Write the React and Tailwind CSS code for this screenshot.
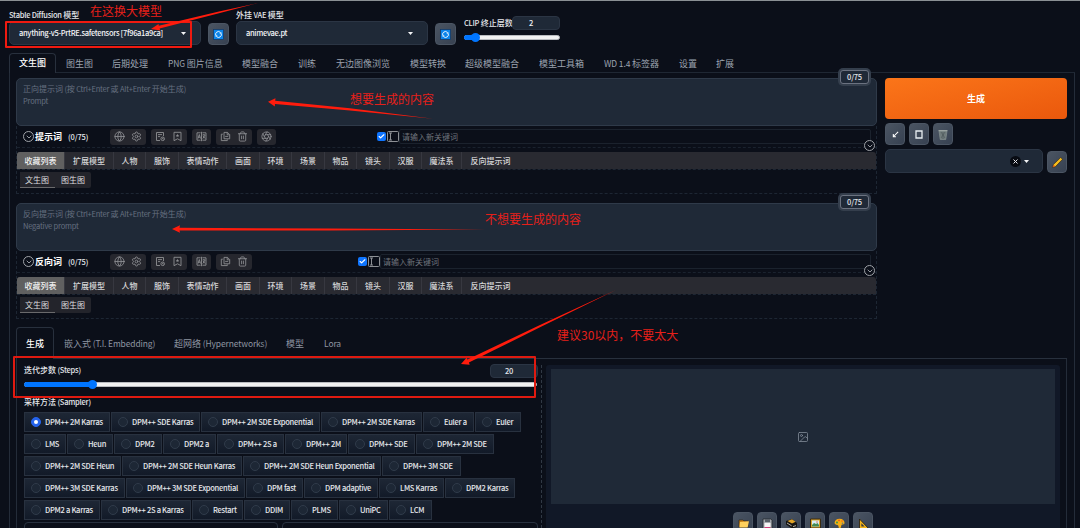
import React from "react";
import { Globe, Settings, Trash2, Aperture, ChevronDown, Image as ImageIcon, Check } from "lucide-react";

const mainTabs = [
  ["文生图", "w-[47px]"], ["图生图", "w-[46px]"], ["后期处理", "w-[56px]"], ["PNG 图片信息", "w-[74px]"],
  ["模型融合", "w-[56px]"], ["训练", "w-[38px]"], ["无边图像浏览", "w-[74px]"], ["模型转换", "w-[55px]"],
  ["超级模型融合", "w-[74px]"], ["模型工具箱", "w-[65px]"], ["WD 1.4 标签器", "w-[75px]"], ["设置", "w-[37px]"], ["扩展", "w-[38px]"],
];

const wordTabs = [
  ["收藏列表", "w-[48px]"], ["扩展模型", "w-[49px]"], ["人物", "w-[32px]"], ["服饰", "w-[33px]"],
  ["表情动作", "w-[48px]"], ["画面", "w-[33px]"], ["环境", "w-[32px]"], ["场景", "w-[33px]"],
  ["物品", "w-[32px]"], ["镜头", "w-[33px]"], ["汉服", "w-[32px]"], ["魔法系", "w-[40px]"], ["反向提示词", "w-[57px]"],
];

const samplerRows = [
  [["DPM++ 2M Karras", "w-[86px]"], ["DPM++ SDE Karras", "w-[89px]"], ["DPM++ 2M SDE Exponential", "w-[119px]"], ["DPM++ 2M SDE Karras", "w-[101px]"], ["Euler a", "w-[51px]"], ["Euler", "w-[46px]"]],
  [["LMS", "w-[42px]"], ["Heun", "w-[46px]"], ["DPM2", "w-[48px]"], ["DPM2 a", "w-[53px]"], ["DPM++ 2S a", "w-[67px]"], ["DPM++ 2M", "w-[62px]"], ["DPM++ SDE", "w-[67px]"], ["DPM++ 2M SDE", "w-[78px]"]],
  [["DPM++ 2M SDE Heun", "w-[97px]"], ["DPM++ 2M SDE Heun Karras", "w-[120px]"], ["DPM++ 2M SDE Heun Exponential", "w-[138px]"], ["DPM++ 3M SDE", "w-[79px]"]],
  [["DPM++ 3M SDE Karras", "w-[101px]"], ["DPM++ 3M SDE Exponential", "w-[119px]"], ["DPM fast", "w-[57px]"], ["DPM adaptive", "w-[74px]"], ["LMS Karras", "w-[65px]"], ["DPM2 Karras", "w-[70px]"]],
  [["DPM2 a Karras", "w-[76px]"], ["DPM++ 2S a Karras", "w-[90px]"], ["Restart", "w-[51px]"], ["DDIM", "w-[46px]"], ["PLMS", "w-[47px]"], ["UniPC", "w-[49px]"], ["LCM", "w-[43px]"]],
];

const toolBtn = "flex shrink-0 items-center justify-center rounded-[4px] border border-[#4b5563] bg-linear-to-br from-[#4b5563] to-[#374151]";

/* Sets Latin runs slightly smaller and tighter than the Chinese text around them. */
function Mixed({ text, tracking = "tracking-[-0.25px]" }) {
  return text.split(/([\x20-\x7e]+)/).filter(Boolean).map((part, i) =>
    /^[\x20-\x7e]/.test(part) ? <span key={i} className={`whitespace-pre text-[0.94em] ${tracking}`}>{part}</span> : part
  );
}

function Caret() {
  return <svg className="shrink-0" width="5" height="3" viewBox="0 0 5 3"><path d="M0 0h5L2.5 3z" fill="#f3f4f6" /></svg>;
}

function Refresh() {
  return (
    <div className={`${toolBtn} mt-[23px] h-[22px] w-[21px]`}>
      <svg className="shrink-0" width="11" height="11" viewBox="0 0 11 11" fill="none">
        <rect x="0.5" y="0.5" width="10" height="10" fill="#0b84ea" stroke="#173b66" strokeWidth="0.8" />
        <path d="M3 6.8A2.8 2.8 0 0 1 7.4 3.4M8 4.2A2.8 2.8 0 0 1 3.6 7.6" stroke="#fff" strokeWidth="0.9" />
        <path d="M8.3 2.7v1.9H6.4zM2.7 8.3V6.4h1.9z" fill="#fff" />
      </svg>
    </div>
  );
}

function Select({ label, value, width }) {
  return (
    <div className={`shrink-0 pt-[9px] ${width}`}>
      <div className="h-[12px] text-[8px] font-medium leading-[12px] text-[#e5e7eb]"><Mixed text={label} /></div>
      <div className="flex h-6 items-center justify-between rounded-[5px] border border-[#2b3544] bg-[#1f2937] pl-[9px] pr-[14px] text-[8px] font-medium text-[#f3f4f6]">
        <span><Mixed text={value} tracking="tracking-[-0.32px]" /></span>
        <Caret />
      </div>
    </div>
  );
}

function CircleDown({ className = "" }) {
  return (
    <span className={`flex size-[11px] shrink-0 items-center justify-center rounded-full border border-[#a0a3a8] text-[#b8bbc0] ${className}`}>
      <ChevronDown size={8} strokeWidth={2.4} />
    </span>
  );
}

function Glyph({ children }) {
  return <svg className="shrink-0" width="11" height="11" viewBox="0 0 11 11" fill="none" stroke="currentColor" strokeWidth="0.9">{children}</svg>;
}

const HistoryIcon = () => <Glyph><path d="M5 9.5H1.5v-8h7v3.5M3 3.6h4M3 5.6h2.2" /><circle cx="7.7" cy="7.8" r="1.8" /><path d="M7.7 6.8v1.2h.9" /></Glyph>;
const FavoriteIcon = () => <Glyph><path d="M2 1.3h7v8.4L5.5 7.8 2 9.7z" /><path d="M5.5 2.8l.5 1.1 1.2.1-.9.8.3 1.2-1.1-.6-1.1.6.3-1.2-.9-.8L5 3.9z" fill="currentColor" stroke="none" /></Glyph>;
const TranslateIcon = () => <Glyph><path d="M4.6 1.8H1v7.4h3.6M6.4 1.8H10v7.4H6.4M5.5.8v9.4M2.1 7.5l1.2-4 1.2 4M2.5 6.2h1.6M6.5 4h2.8M7.9 3v1M9 4.2L6.8 7.6M7 5l2.2 2.6" /></Glyph>;
const CopyIcon = () => <Glyph><path d="M4 1.4h3.5l2.2 2.2v4.2H4zM7.2 1.4v2.4h2.4M2.8 3.2H1.3v6.4h6V8.4M5.2 5.4h3" /></Glyph>;

function IconGroup({ icons }) {
  return (
    <div className="flex h-4 items-center gap-[6px] rounded-[3px] bg-[#26272e] px-[4px] text-[#8d8e92]">
      {icons.map((Icon, i) => <Icon key={i} size={11} strokeWidth={1.9} />)}
    </div>
  );
}

function PromptBlock({ line1, line2, title, extra }) {
  return (
    <div className="w-[861px]">
      <div className="relative h-12 rounded-[5px] border border-[#2f3a49] bg-[#1f2937] pl-[6px] pt-[4px] text-[8px] leading-[12px] text-[#667080]">
        <div className="h-[12px]"><Mixed text={line1} /></div>
        <div className="h-[12px]"><Mixed text={line2} tracking="tracking-[-0.2px]" /></div>
        <div className="absolute right-[7px] top-[-9px] flex h-[14px] w-[29px] items-center justify-center rounded-[3px] border border-[#6b7280] bg-[#1f2937] text-[8px] font-medium text-[#e5e7eb] shadow-[0_0_0_2px_#343e4c]"><Mixed text="0/75" /></div>
      </div>
      <div className="h-[68px] border-x border-b border-dashed border-[#1d2633]">
        <div className="relative flex h-[22px] items-center border-b border-dashed border-[#1a222e] pl-[6px]">
          <CircleDown />
          <span className="ml-[1px] w-[33px] text-[9px] font-bold text-white">{title}</span>
          <span className="w-[42px] text-[8px] font-medium text-[#e5e7eb]"><Mixed text="(0/75)" tracking="tracking-[-0.15px]" /></span>
          <div className="flex gap-[5px]">
            <IconGroup icons={[Globe, Settings]} />
            <IconGroup icons={[HistoryIcon, FavoriteIcon]} />
            <IconGroup icons={[TranslateIcon]} />
            <IconGroup icons={[CopyIcon, Trash2]} />
            {extra && <IconGroup icons={[Aperture]} />}
          </div>
          <div className={`flex flex-1 items-center ${extra ? "ml-[101px]" : "ml-[106px]"}`}>
            <span className="flex size-[9px] items-center justify-center rounded-[2px] bg-[#0f75ff] text-white"><Check size={7} strokeWidth={4} /></span>
            <svg className="ml-[1px]" width="12" height="11" viewBox="0 0 12 11" fill="none" stroke="#8d9095">
              <rect x="0.5" y="0.5" width="11" height="10" rx="1" />
              <path d="M2 2h3M3.5 2v7M2 9h3" />
            </svg>
            <span className="mr-[5px] flex h-[15px] flex-1 items-center rounded-[2px] border border-[#1b222d] pl-[2px] text-[8px] text-[#6f747c]">请输入新关键词</span>
          </div>
          <CircleDown className="absolute right-[1px] top-[14px] bg-[#0b0f19]" />
        </div>
        <div className="mt-[4px] flex h-[17px] rounded-t-[3px] bg-[#292a31] text-[8px] font-medium text-[#d6d6d8]">
          {wordTabs.map(([name, w], i) => (
            <div key={name} className={`flex h-full shrink-0 items-center justify-center ${w} ${i === 0 ? "rounded-tl-[3px] bg-[#606060] text-[#f0f0f0]" : ""} ${i < 12 ? "border-r border-[#373840]" : ""}`}>{name}</div>
          ))}
        </div>
        <div className="flex h-[24px] border-t border-dashed border-[#1d2633] pl-[3px] pt-[2px] text-[8px] text-[#dcdcde]">
          <div className="flex h-[16px] w-[35px] items-center border-b border-[#6a6a6c] bg-[#23242b] pl-[5px]">文生图</div>
          <div className="flex h-[16px] w-[36px] items-center rounded-r-[2px] bg-[#23242b] pb-px pl-[6px]">图生图</div>
        </div>
      </div>
    </div>
  );
}

function Slider({ fill, className }) {
  return (
    <div className={`relative h-[5px] rounded-full border border-[#b9bbbf] bg-[#f1f1f1] ${className}`}>
      <div className={`absolute -left-px -top-px h-[5px] rounded-full bg-[#0075ff] ${fill}`}>
        <span className="absolute -right-[4px] -top-[2px] size-[9px] rounded-full bg-[#0075ff]" />
      </div>
    </div>
  );
}

const outputIcons = [
  <svg key="folder" width="11" height="11" viewBox="0 0 11 11"><path d="M1 2h4l1 1h4v6H1z" fill="#c47a12" stroke="#2b2113" strokeWidth=".6" /><path d="M2 4l9-.8L9.6 9.5H1.4z" fill="#ffd05c" /></svg>,
  <svg key="disk" width="11" height="11" viewBox="0 0 11 11"><path d="M1 1h8l1 1v9H1z" fill="#a7abb0" stroke="#25282d" strokeWidth=".8" /><path d="M3 1h5v3H3z" fill="#5a6068" /><path d="M2.5 5h6v4h-6z" fill="#f7f4f5" /><path d="M2.5 9h6v2h-6z" fill="#cf3d79" /></svg>,
  <svg key="box" width="11" height="11" viewBox="0 0 11 11"><path d="M0 3l6-2 5 4v4l-5 1.5-6-4z" fill="#171512" /><path d="M1.5 3L6 1.2l3.6 2.6L6 5.4z" fill="#e2a528" /><path d="M1 5l4.6 2.8M7 8.6l3-1" stroke="#d9d4c4" strokeWidth=".8" fill="none" /></svg>,
  <svg key="picture" width="11" height="11" viewBox="0 0 11 11"><path d="M.5 1h10v9H.5z" fill="#dda52b" stroke="#3c2c10" /><path d="M2 2.5h7v6H2z" fill="#d7edf3" /><path d="M2 7l2-2 2 1 1.5-1L9 7v1.5H2z" fill="#438a54" /><circle cx="7" cy="4" r=".7" fill="#d95842" /></svg>,
  <svg key="palette" width="11" height="11" viewBox="0 0 11 11"><path d="M5.5.8C9 .8 10.8 3 10.5 5.3 10.2 7 8 6 7.4 7.2 7 8.5 7 10.5 5.5 10.3 4 10 5 7.3 3.5 7 1.5 7 .5 6 .6 4.6.8 2.3 3 .8 5.5.8z" fill="#f6ae14" /><circle cx="3" cy="4.6" r="1" fill="#3d9847" /><circle cx="5" cy="2.4" r=".8" fill="#e54724" /><circle cx="8" cy="3" r=".8" fill="#f35b18" /><circle cx="8.5" cy="5.2" r=".8" fill="#657d8a" /></svg>,
  <svg key="ruler" width="11" height="11" viewBox="0 0 11 11"><path d="M1.5 1v9.5h9z" fill="#f3b41b" stroke="#241c0e" strokeWidth=".8" /><path d="M3.4 5.3v3.3h3.2z" fill="#343943" /></svg>,
];

function Annotations() {
  return (
    <div className="pointer-events-none absolute inset-0 text-[12px] leading-[16px] text-[#e6201a]">
      <div className="absolute left-[5px] top-[21px] h-[27px] w-[187px] rounded-[1px] border-2 border-[#ef1a10]" />
      <div className="absolute left-[13px] top-[356px] h-[42px] w-[523px] rounded-[1px] border-2 border-[#df1a10]" />
      <svg className="absolute inset-0" width="1080" height="528" viewBox="0 0 1080 528" fill="#ff1c0d">
        <path d="M151 29L158.5 24 158.8 25.8 220 11.2 258 3 220 13 159.6 28.4 160.3 30.6z" />
        <path d="M268 101.8L275.5 98.2 275.2 100.8 350 108.2 433 118.8 350 110.4 275 103.9 274.8 106.4z" />
        <path d="M172 229L180 225.2 179.5 227.8 330 228.5 486 229.6 330 230.4 179.5 230.4 180 232.8z" />
        <path d="M461 364L466.5 357.7 467.5 359.4 540 325 616 290 540 327.2 468.9 362.6 469.7 364.8z" />
      </svg>
      <span className="absolute left-[90px] top-[3px]">在这换大模型</span>
      <span className="absolute left-[350px] top-[91px]">想要生成的内容</span>
      <span className="absolute left-[485px] top-[211px]">不想要生成的内容</span>
      <span className="absolute left-[557px] top-[327px]">建议30以内，不要太大</span>
    </div>
  );
}

export default function App() {
  return (
    <div className="relative h-[528px] w-[1080px] overflow-hidden whitespace-nowrap bg-[#0b0f19] font-['Noto_Sans_CJK_SC',sans-serif]">
      <div className="flex h-[53px] border-t border-[#8b9094] pl-[9px] *:-translate-y-px">
        <Select label="Stable Diffusion 模型" value="anything-v5-PrtRE.safetensors [7f96a1a9ca]" width="w-[192px] mr-[7px]" />
        <Refresh />
        <Select label="外挂 VAE 模型" value="animevae.pt" width="w-[192px] ml-[7px] mr-[7px]" />
        <Refresh />
        <div className="ml-[8px] w-[96px] pt-[16px]">
          <div className="flex h-[14px] items-center justify-between">
            <span className="w-[48px] pb-px text-[8px] font-medium text-[#e5e7eb]"><Mixed text="CLIP 终止层数" /></span>
            <span className="flex h-[14px] w-[48px] items-center rounded-[4px] border border-[#2b3544] bg-[#1f2937] pl-[16px] text-[8px] font-medium text-[#f3f4f6]"><Mixed text="2" /></span>
          </div>
          <Slider fill="w-[12px]" className="mt-[5px]" />
        </div>
      </div>

      <div className="flex h-5 pl-[9px] pr-[5px] text-[9px] text-[#9ca3af]">
        {mainTabs.map(([name, w], i) => (
          <div key={name} className={`flex shrink-0 items-center ${w} ${i === 0 ? "rounded-t-[4px] border border-b-0 border-[#28303d] pb-px pl-[9px] font-medium text-white" : "border-b border-[#1f2733] pl-[10px] pt-[2px]"}`}><span><Mixed text={name} tracking="tracking-[-0.1px]" /></span></div>
        ))}
        <div className="flex-1 border-b border-[#1f2733]" />
      </div>

      <div className="ml-[9px] h-[455px] w-[1066px] border-x border-[#242c39] pl-[6px] pt-[5px]">
        <div className="flex h-[249px] gap-[8px]">
          <div className="flex flex-col gap-[9px]">
            <PromptBlock line1="正向提示词 (按 Ctrl+Enter 或 Alt+Enter 开始生成)" line2="Prompt" title="提示词" extra />
            <PromptBlock line1="反向提示词 (按 Ctrl+Enter 或 Alt+Enter 开始生成)" line2="Negative prompt" title="反向词" />
          </div>
          <div className="w-[182px]">
            <div className="flex h-[41px] items-center justify-center rounded-[4px] bg-linear-to-br from-[#fb7519] to-[#ea580c] text-[9px] font-bold text-white">生成</div>
            <div className="mt-[4px] flex gap-[4px]">
              <div className={`${toolBtn} h-[22px] w-[20px]`}><svg width="7" height="7" viewBox="0 0 8 8" fill="none" stroke="#fff" strokeWidth="1.2"><path d="M7 1L2 6M1.5 3.5v3h3" /></svg></div>
              <div className={`${toolBtn} h-[22px] w-[20px]`}><svg width="8" height="9" viewBox="0 0 8 9" fill="none" stroke="#e8eef2" strokeWidth="1.3"><path d="M1 1h6v7H1z" /></svg></div>
              <div className={`${toolBtn} h-[22px] w-[20px]`}><svg width="10" height="11" viewBox="0 0 10 11"><path d="M1 2h8l-1.2 8.5H2.2z" fill="#707b7c" stroke="#8c9795" strokeWidth=".6" /><path d="M.5 1.6h9" stroke="#a0a9a6" /><path d="M3 3l4 6M7 3L3 9M5 3v7" stroke="#4a5558" strokeWidth=".6" /></svg></div>
            </div>
            <div className="mt-[4px] flex items-end gap-[4px]">
              <div className="flex h-6 w-[158px] items-center justify-end gap-[3px] rounded-[5px] border border-[#2b3544] bg-[#1f2937] pr-[13px]">
                <span className="flex size-[11px] items-center justify-center rounded-full bg-[#080b12]"><svg width="5" height="5" viewBox="0 0 5 5" stroke="#e5e7eb"><path d="M.5.5l4 4M4.5.5l-4 4" /></svg></span>
                <Caret />
              </div>
              <div className={`${toolBtn} h-[22px] w-[20px]`}><svg width="11" height="11" viewBox="0 0 11 11"><path d="M.5 10.5l.9-3L8.7.5l1.8 1.8L3.5 9.6z" fill="#f7bd1c" stroke="#30240e" strokeWidth=".6" /><path d="M.8 10.2l.8-2.5 1.7 1.7z" fill="#d4571d" /></svg></div>
            </div>
          </div>
        </div>

        <div className="flex h-[32px] w-[1051px] text-[9px] text-[#8e95a1]">
          <div className="flex w-[38px] items-center justify-center rounded-t-[4px] border border-b-0 border-[#28303d] font-medium text-white">生成</div>
          <div className="flex flex-1 items-center border-b border-[#28303d] pl-[10px] pt-[2px]">
            <span className="w-[110px]"><Mixed text="嵌入式 (T.I. Embedding)" tracking="tracking-[-0.12px]" /></span>
            <span className="w-[112px]"><Mixed text="超网络 (Hypernetworks)" tracking="tracking-[-0.12px]" /></span>
            <span className="w-[38px]">模型</span>
            <span><Mixed text="Lora" tracking="tracking-[-0.1px]" /></span>
          </div>
        </div>
        <div className="flex h-[169px] w-[1051px] border-x border-[#242c39] pl-[7px]">
          <div className="w-[514px] shrink-0 pt-[5px] text-[8px] font-medium text-[#e5e7eb]">
            <div className="flex h-[14px] justify-between">
              <span className="leading-[12px]"><Mixed text="迭代步数 (Steps)" /></span>
              <span className="flex h-[14px] w-[48px] items-center rounded-[4px] border border-[#2b3544] bg-[#1f2937] pl-[14px]"><Mixed text="20" /></span>
            </div>
            <Slider fill="w-[69px]" className="mt-[4px] w-[513px]" />
            <div className="mt-[9px] h-[12px] leading-[12px]"><Mixed text="采样方法 (Sampler)" /></div>
            <div className="mt-[4px] flex flex-col gap-[2px]">
              {samplerRows.map((row, r) => (
                <div key={r} className="flex gap-px">
                  {row.map(([name, w], c) => (
                    <div key={name} className={`flex h-5 shrink-0 items-center border border-[#28313f] bg-linear-to-b from-[#1e2735] to-[#121a28] pl-[6px] ${w}`}>
                      <span className={`mr-[4px] flex size-[10px] shrink-0 items-center justify-center rounded-full border ${r === 0 && c === 0 ? "border-[#2563eb] bg-[#2563eb]" : "border-[#303b4a] bg-[#1d2735]"}`}>
                        {r === 0 && c === 0 && <span className="size-[4px] rounded-full bg-white" />}
                      </span>
                      <Mixed text={name} tracking="tracking-[-0.28px]" />
                    </div>
                  ))}
                </div>
              ))}
            </div>
            <div className="mt-[2px] flex gap-[4px]">
              <div className="h-[14px] w-[254px] rounded-[4px] border border-[#28313f]" />
              <div className="h-[14px] w-[256px] rounded-[4px] border border-[#28313f]" />
            </div>
          </div>
          <div className="ml-[3px] mt-[6px] border-l border-dashed border-[#303844]" />
          <div className="ml-[4px] mt-[6px] w-[514px] rounded-t-[3px] bg-[#111827] px-[5px] pt-[4px]">
            <div className="flex h-[135px] items-center justify-center bg-[#1f2937] text-[#828b98]"><ImageIcon size={12} strokeWidth={1.6} /></div>
            <div className="mt-[8px] flex gap-[4px] pl-[182px]">
              {outputIcons.map((icon, i) => <div key={i} className={`${toolBtn} h-[22px] w-[20px]`}>{icon}</div>)}
            </div>
          </div>
        </div>
      </div>
      <Annotations />
    </div>
  );
}
